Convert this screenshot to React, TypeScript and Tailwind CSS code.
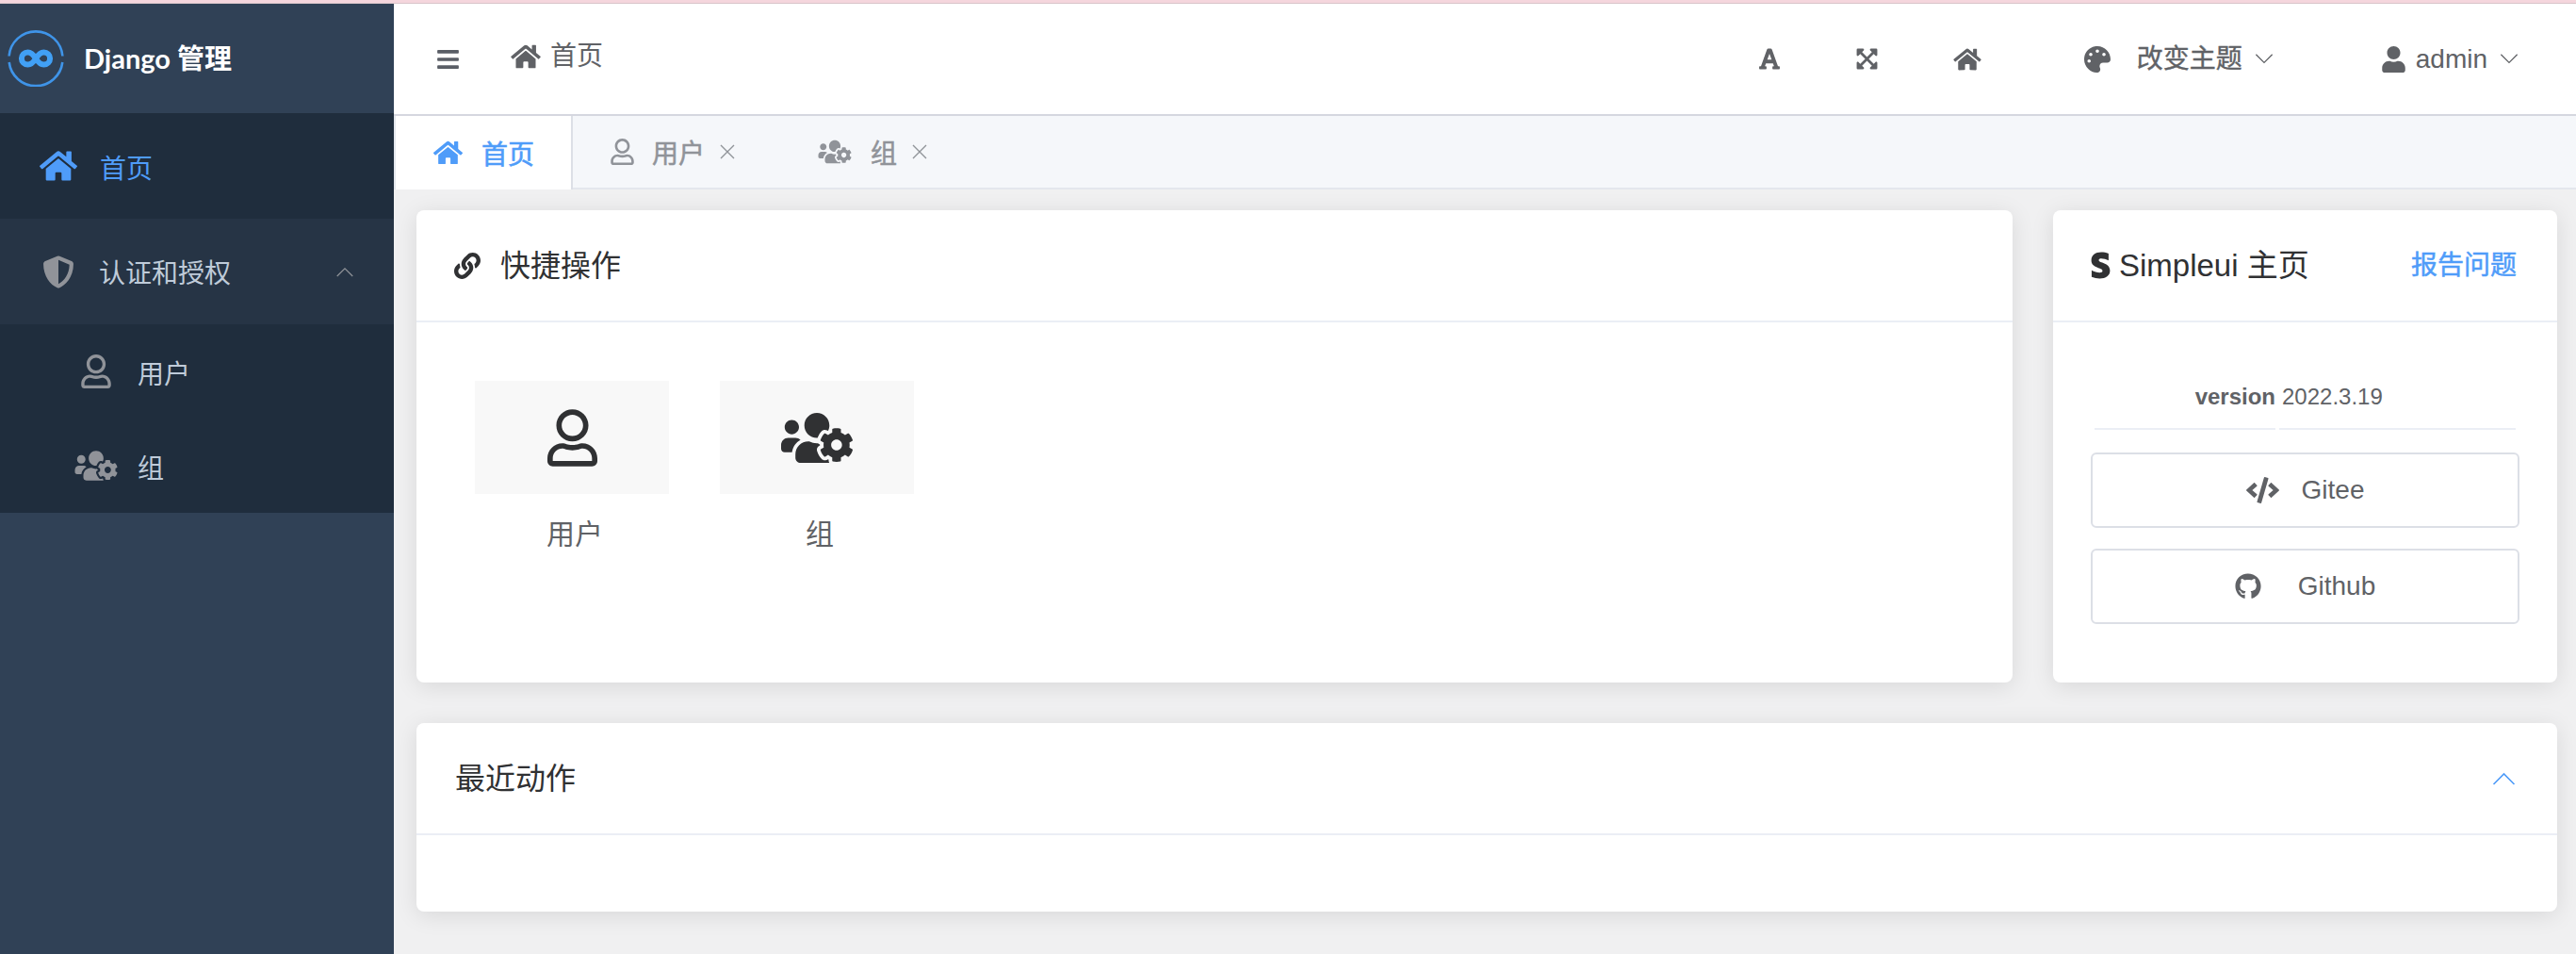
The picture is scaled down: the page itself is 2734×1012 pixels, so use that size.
import React from "react";
import {
  FaBars,
  FaCode,
  FaExpandArrowsAlt,
  FaFont,
  FaGithub,
  FaHome,
  FaLink,
  FaPalette,
  FaRegUser,
  FaShieldAlt,
  FaStripeS,
  FaUser,
  FaUsersCog,
} from "react-icons/fa";

const font = "font-['Liberation_Sans','Noto_Sans_CJK_SC',sans-serif]";

const Chevron = ({ up, className }: { up?: boolean; className: string }) => (
  <svg viewBox="0 0 24 14" fill="none" stroke="currentColor" strokeWidth="1.6" className={className}>
    <path d={up ? "M1 13 12 2l11 11" : "M1 1l11 11L23 1"} />
  </svg>
);

const Close = () => (
  <svg viewBox="0 0 18 18" stroke="currentColor" strokeWidth="1.4" className="ml-[15px] h-[18px] w-[18px] text-[#909399]">
    <path d="M2 2l14 14M16 2 2 16" />
  </svg>
);

const Logo = () => (
  <svg viewBox="0 0 60 60" fill="none" className="h-[60px] w-[60px]">
    <path d="M1.6 27.500A28.500 28.500 0 0 1 58.400 27.500" stroke="#3f94e8" strokeWidth="2.6" />
    <path d="M1.700 34A28.500 28.500 0 0 0 58.300 34" stroke="#3f94e8" strokeWidth="2.6" />
    <path
      d="M30 30c-2.500-4-5-6.600-8.500-6.600a6.600 6.600 0 0 0 0 13.200c3.500 0 6-2.600 8.500-6.600s5-6.600 8.500-6.600a6.600 6.600 0 0 1 0 13.200c-3.500 0-6-2.600-8.500-6.600Z"
      stroke="#41a0f5"
      strokeWidth="6"
    />
  </svg>
);

const Sidebar = () => (
  <aside className="flex w-[418px] shrink-0 flex-col bg-[#304156]">
    <div className="flex h-[116px] items-center pl-2">
      <Logo />
      <span className="ml-[21px] font-['Lato','Noto_Sans_CJK_SC',sans-serif] text-[29px] font-bold text-white">Django 管理</span>
    </div>
    <div className="flex h-[112px] items-center bg-[#1f2d3d] pl-[42px] text-[#4f9cf9]">
      <FaHome className="h-[36px] w-[40px]" />
      <span className="ml-[24px] translate-y-[4px] text-[28px]">首页</span>
    </div>
    <div className="flex h-[112px] items-center bg-[#263445] pl-[45px] pr-[43px] text-[#bfcbd9]">
      <FaShieldAlt className="h-[35px] w-[34px] text-[#909399]" />
      <span className="ml-[26px] translate-y-[3px] text-[28px]">认证和授权</span>
      <Chevron up className="ml-auto h-[11px] w-[18px] text-[#909399]" />
    </div>
    <div className="flex h-[200px] flex-col bg-[#1f2d3d] text-[#bfcbd9]">
      <div className="flex h-[100px] items-center">
        <div className="flex w-[146px] justify-end pr-[28px]">
          <FaRegUser className="h-[36px] w-[32px] text-[#909399]" />
        </div>
        <span className="translate-y-[4px] text-[28px]">用户</span>
      </div>
      <div className="flex h-[100px] items-center">
        <div className="flex w-[146px] justify-end pr-[21px]">
          <FaUsersCog className="h-[36px] w-[46px] text-[#909399]" />
        </div>
        <span className="translate-y-[4px] text-[28px]">组</span>
      </div>
    </div>
  </aside>
);

const Header = () => (
  <header className="flex h-[119px] items-center border-b-2 border-[#d5d7df] bg-white text-[#606266]">
    <FaBars className="ml-[45px] h-[26px] w-[25px] text-[#5a5e66]" />
    <div className="ml-[54px] flex -translate-y-[3px] items-center">
      <FaHome className="h-[28px] w-[32px]" />
      <span className="ml-[10px] text-[28px]">首页</span>
    </div>
    <div className="ml-auto flex items-center">
      <FaFont className="h-[25px] w-[24px]" />
      <FaExpandArrowsAlt className="ml-[79px] h-[25px] w-[25px]" />
      <FaHome className="ml-[79px] h-[26px] w-[30px]" />
      <FaPalette className="ml-[109px] h-[28px] w-[28px]" />
      <span className="ml-[28px] text-[28px] [-webkit-text-stroke:0.4px]">改变主题</span>
      <Chevron className="ml-[13px] h-[11px] w-[20px]" />
      <FaUser className="ml-[115px] h-[28px] w-[25px]" />
      <span className="ml-[11px] text-[28px]">admin</span>
      <Chevron className="ml-[13px] mr-[61px] h-[11px] w-[20px]" />
    </div>
  </header>
);

const Tabs = () => (
  <div className="flex h-[78px] border-b-2 border-[#e4e7ed] bg-[#f5f7fa] text-[28px] text-[#909399]">
    <div className="flex h-[78px] w-[188px] items-center border-r-2 border-[#dcdfe6] bg-white pl-[40px] text-[#4f9cf9]">
      <FaHome className="h-[28px] w-[31px]" />
      <span className="ml-[20px] translate-y-[3px] [-webkit-text-stroke:0.6px]">首页</span>
    </div>
    <div className="flex w-[260px] items-center pl-[40px]">
      <FaRegUser className="h-[28px] w-[25px]" />
      <span className="ml-[19px] translate-y-[3px] [-webkit-text-stroke:0.5px]">用户</span>
      <Close />
    </div>
    <div className="flex items-center">
      <FaUsersCog className="h-[28px] w-[36px]" />
      <span className="ml-[20px] translate-y-[3px] [-webkit-text-stroke:0.5px]">组</span>
      <Close />
    </div>
  </div>
);

const CardHeader = ({ children }: { children: React.ReactNode }) => (
  <div className="flex h-[119px] items-center border-b-2 border-[#ebeef5] text-[32px] text-[#303133]">{children}</div>
);

const QuickLink = ({ icon, label }: { icon: React.ReactNode; label: string }) => (
  <div className="flex w-[206px] flex-col items-center">
    <div className="flex h-[120px] w-full items-center justify-center bg-[#f8f8f8] text-[#303133]">{icon}</div>
    <span className="mt-[23px] pl-[6px] text-[30px] leading-[40px] text-[#606266]">{label}</span>
  </div>
);

const LinkButton = ({ icon, label }: { icon: React.ReactNode; label: string }) => (
  <div className="flex h-[80px] items-center justify-center rounded-md border-2 border-[#dcdfe6] text-[28px] text-[#606266]">
    {icon}
    <span>{label}</span>
  </div>
);

const cardClass = "rounded-lg bg-white shadow-[0_4px_24px_rgba(0,0,0,0.1)]";

export default function App() {
  return (
    <div className={`flex h-[1012px] w-[2734px] flex-col overflow-hidden bg-[#f0f0f1] ${font}`}>
      <div className="h-[4px] shrink-0 border-b border-[#d9c5ca] bg-[#f5d6dd]" />
      <div className="flex min-h-0 flex-1">
        <Sidebar />
        <main className="flex min-w-0 flex-1 flex-col">
          <Header />
          <div className="border-l-2 border-[#e4e7ed]">
            <Tabs />
          </div>
          <div className="flex flex-col gap-[43px] pl-[24px] pr-[20px] pt-[22px]">
            <div className="flex gap-[43px]">
              <section className={`h-[501px] flex-1 ${cardClass}`}>
                <CardHeader>
                  <FaLink className="ml-[40px] h-[28px] w-[28px]" />
                  <span className="ml-[21px]">快捷操作</span>
                </CardHeader>
                <div className="flex gap-[54px] pl-[62px] pt-[62px]">
                  <QuickLink icon={<FaRegUser className="h-[61px] w-[53px]" />} label="用户" />
                  <QuickLink icon={<FaUsersCog className="h-[61px] w-[76px]" />} label="组" />
                </div>
              </section>
              <section className={`h-[501px] w-[535px] shrink-0 ${cardClass}`}>
                <CardHeader>
                  <FaStripeS className="ml-[40px] h-[29px] w-[21px]" />
                  <span className="ml-[9px] text-[33px]">Simpleui 主页</span>
                  <span className="ml-auto mr-[43px] text-[28px] text-[#4f9cf9] [-webkit-text-stroke:0.5px]">报告问题</span>
                </CardHeader>
                <div className="px-[40px] pt-[59px]">
                  <div className="flex h-[55px] gap-[4px] px-[4px] text-[24px] leading-[40px] text-[#606266]">
                    <div className="w-[192px] border-b-2 border-[#ebeef5] text-right font-bold">version</div>
                    <div className="flex-1 border-b-2 border-[#ebeef5] pl-[3px]">2022.3.19</div>
                  </div>
                  <div className="mt-[24px] flex flex-col gap-[22px]">
                    <LinkButton icon={<FaCode className="mr-[24px] h-[28px] w-[35px]" />} label="Gitee" />
                    <LinkButton icon={<FaGithub className="mr-[39px] h-[28px] w-[28px]" />} label="Github" />
                  </div>
                </div>
              </section>
            </div>
            <section className={`h-[200px] ${cardClass}`}>
              <CardHeader>
                <span className="ml-[41px]">最近动作</span>
                <Chevron up className="ml-auto mr-[44px] h-[14px] w-[25px] text-[#4f9cf9]" />
              </CardHeader>
            </section>
          </div>
        </main>
      </div>
    </div>
  );
}
